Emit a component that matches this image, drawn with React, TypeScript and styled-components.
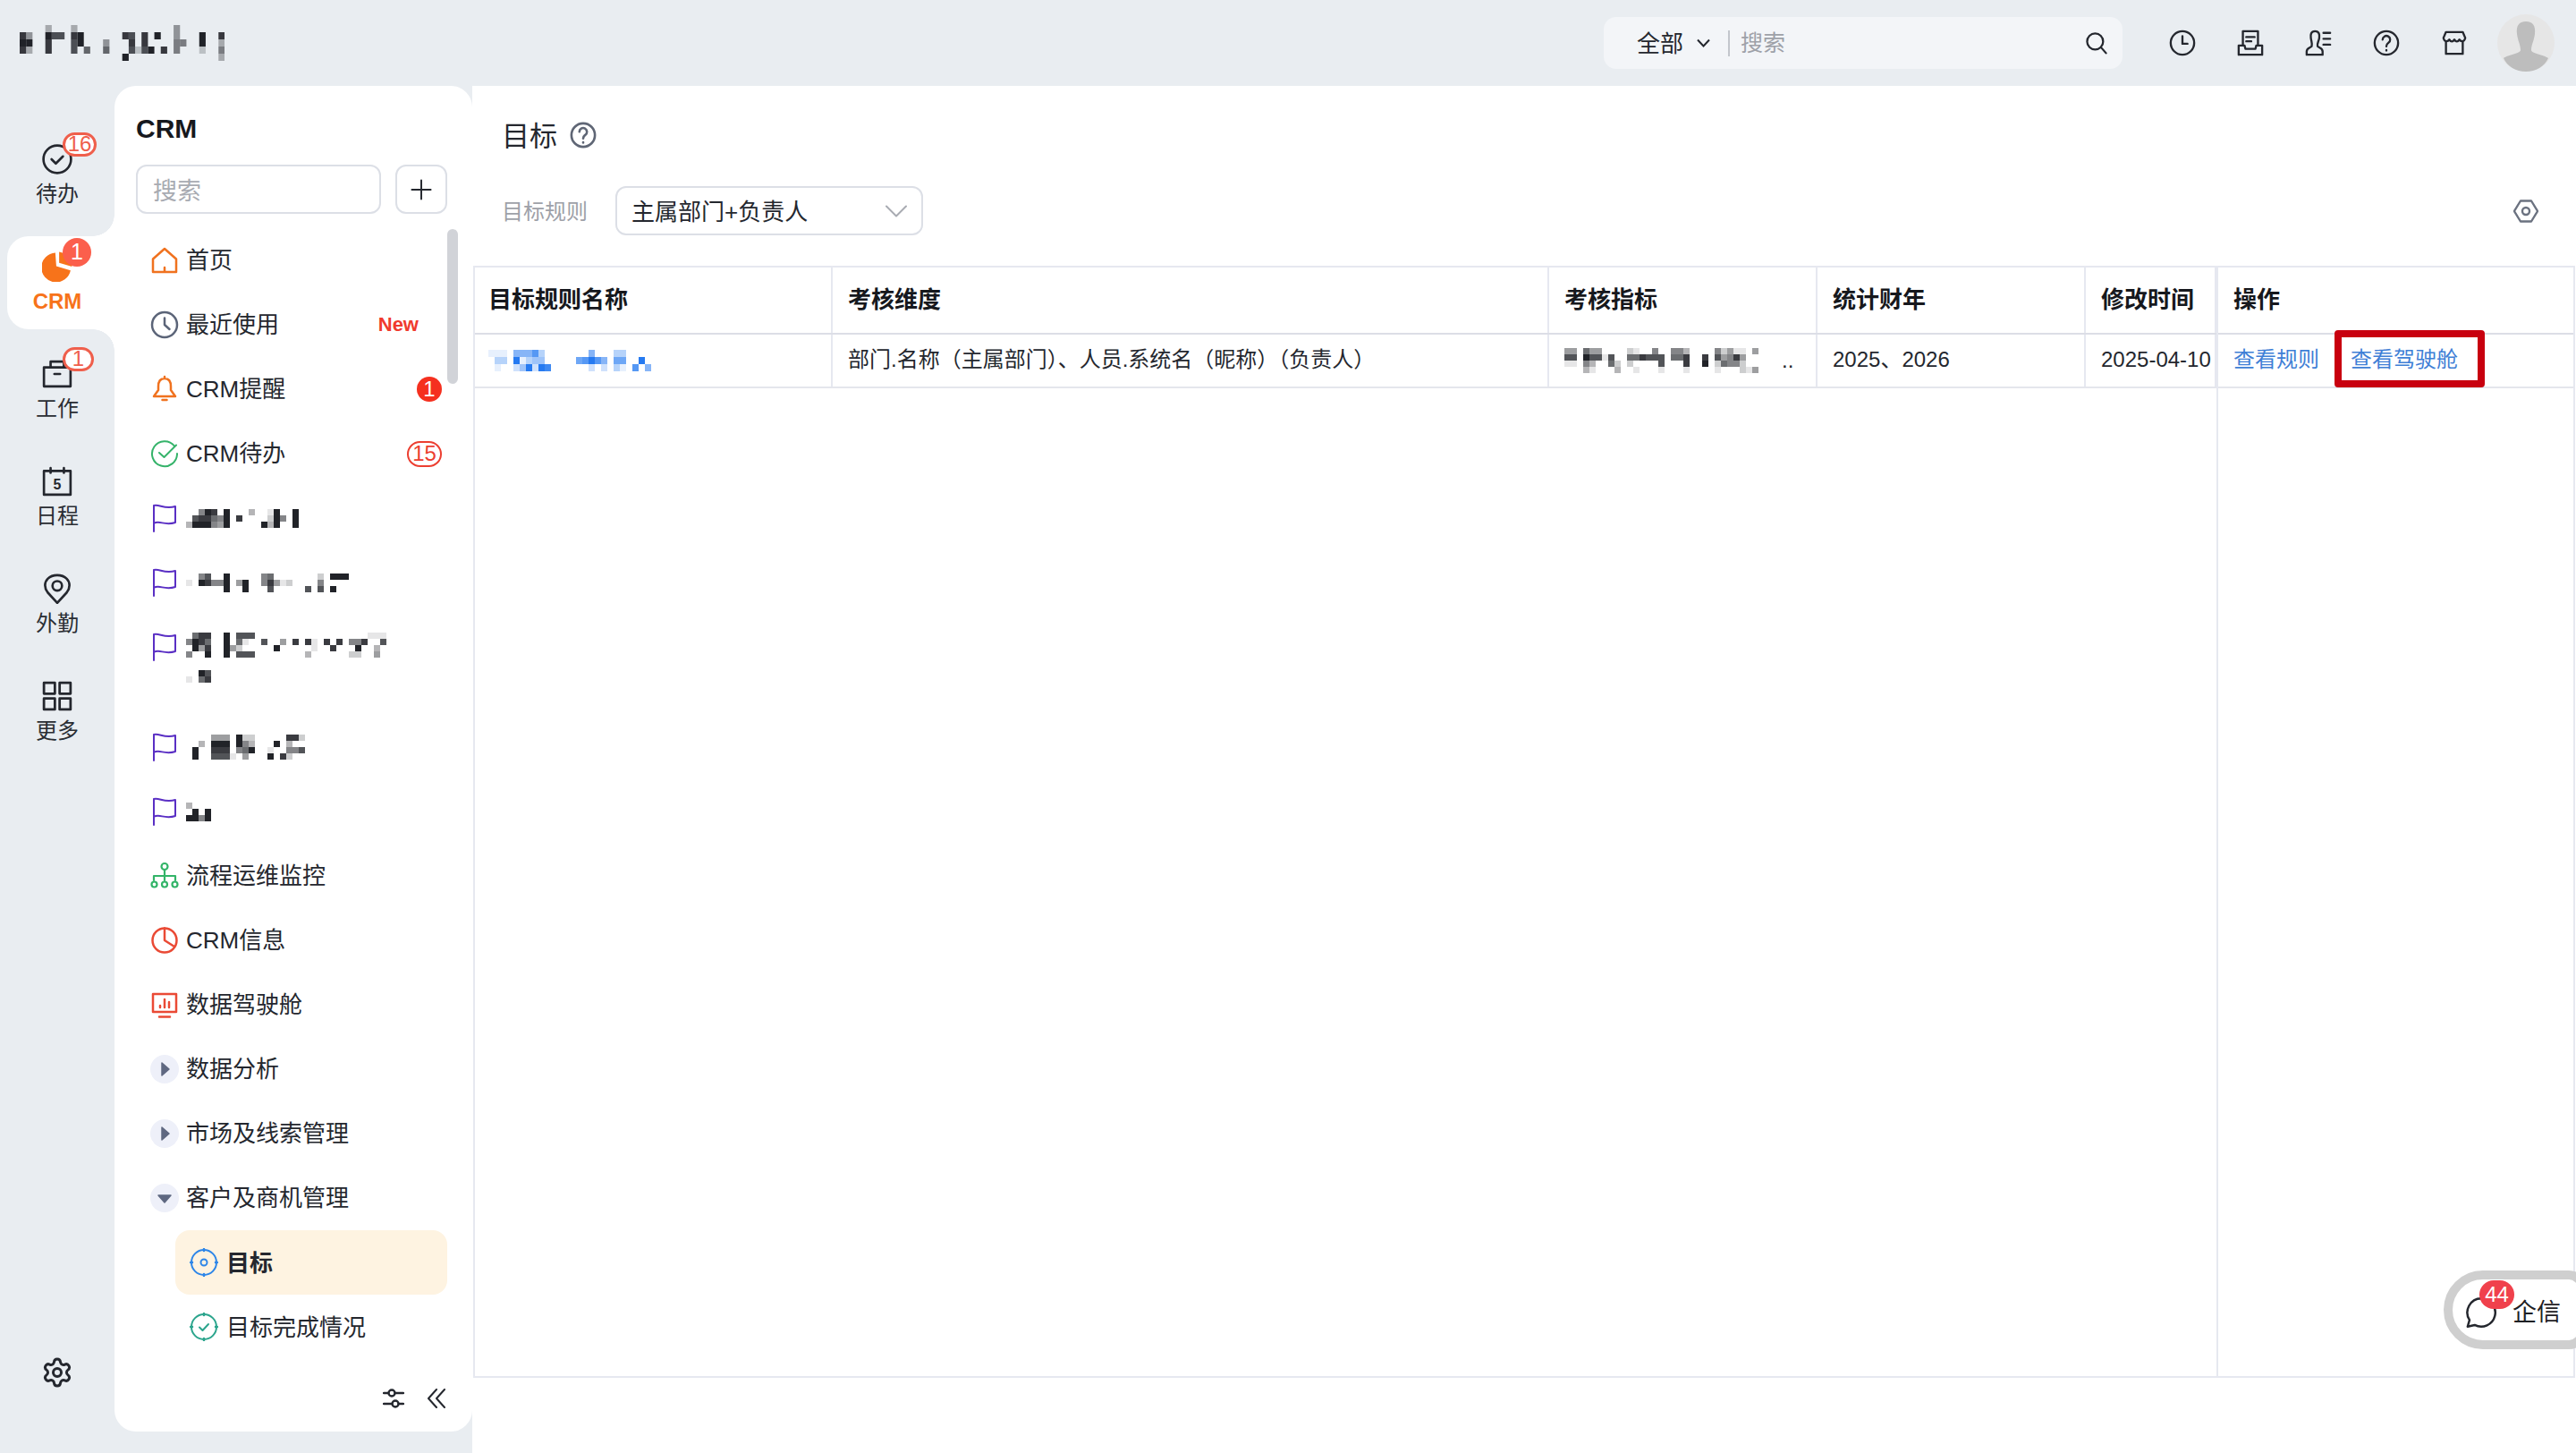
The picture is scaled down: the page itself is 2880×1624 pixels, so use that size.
import React from "react";
import styled, { createGlobalStyle } from "styled-components";
import { Settings } from "lucide-react";

const GlobalStyle = createGlobalStyle`
  html, body {
    margin: 0;
    padding: 0;
    background: #fff;
  }
  body {
    font-family: "Liberation Sans", "Noto Sans CJK SC", sans-serif;
    color: #24272e;
  }
  * {
    box-sizing: border-box;
  }
`;

const Page = styled.div`
  width: 2880px;
  height: 1624px;
  display: flex;
  flex-direction: column;
  overflow: hidden;
  background: #e9edf1;
`;

/* top bar */

const TopBar = styled.header`
  height: 96px;
  flex: none;
  display: flex;
  align-items: center;
  padding: 0 24px 0 22px;
`;

const GlobalSearch = styled.div`
  margin-left: auto;
  width: 580px;
  height: 58px;
  display: flex;
  align-items: center;
  padding: 0 16px 0 37px;
  background: #f3f5f8;
  border-radius: 14px;
  font-size: 26px;
`;

const SearchScope = styled.span`
  margin-bottom: 4px;
`;

const ScopeCaret = styled.svg`
  width: 15px;
  height: 10px;
  margin-left: 15px;
`;

const SearchDivider = styled.span`
  width: 2px;
  height: 29px;
  margin: 0 12px 0 20px;
  background: #c3c6cc;
`;

const SearchHint = styled.span`
  flex: 1;
  margin-bottom: 4px;
  font-size: 25px;
  color: #9ea1a8;
`;

const TopIcons = styled.div`
  display: flex;
  align-items: center;
  gap: 46px;
  margin-left: 52px;
`;

const Avatar = styled.svg`
  width: 64px;
  height: 64px;
  margin-left: 33px;
`;

/* rail */

const Body = styled.div`
  flex: 1;
  display: flex;
  min-height: 0;
`;

const Rail = styled.nav`
  width: 128px;
  flex: none;
  display: flex;
  flex-direction: column;
  gap: 16.2px;
  padding: 47.5px 0 72px;
`;

const RailItem = styled.div<{ $active?: boolean }>`
  position: relative;
  width: 120px;
  height: 104px;
  margin-left: 8px;
  padding: 16px 8px 0 0;
  display: flex;
  flex-direction: column;
  align-items: center;
  gap: 6px;
  border-radius: 24px 0 0 24px;
  background: ${(p) => (p.$active ? "#fff" : "transparent")};

  ${(p) =>
    p.$active &&
    `
    &::before, &::after {
      content: "";
      position: absolute;
      right: 0;
      width: 24px;
      height: 24px;
    }
    &::before {
      top: -24px;
      background: radial-gradient(circle at 0 0, transparent 23.5px, #fff 24px);
    }
    &::after {
      bottom: -24px;
      background: radial-gradient(circle at 0 100%, transparent 23.5px, #fff 24px);
    }
  `}
`;

const RailIcon = styled.div`
  position: relative;
  width: 36px;
  height: 36px;
  display: flex;
  align-items: center;
  justify-content: center;
`;

const RailLabel = styled.span<{ $active?: boolean }>`
  font-size: 24px;
  line-height: 30px;
  font-weight: ${(p) => (p.$active ? 700 : 400)};
  color: ${(p) => (p.$active ? "#f7731a" : "#2a2d33")};
`;

const RailBadge = styled.span<{ $filled?: boolean; $w: number; $h: number }>`
  position: absolute;
  left: 24px;
  top: ${(p) => (p.$filled ? -14 : -12)}px;
  width: ${(p) => p.$w}px;
  height: ${(p) => p.$h}px;
  display: flex;
  align-items: center;
  justify-content: center;
  border-radius: 20px;
  font-size: ${(p) => (p.$filled ? 25 : 24)}px;
  color: ${(p) => (p.$filled ? "#fff" : "#ef5f4c")};
  background: ${(p) => (p.$filled ? "#fb5f4c" : "#fff")};
  border: ${(p) => (p.$filled ? "none" : "3px solid #ef5f4c")};
`;

const RailFoot = styled.div`
  margin-top: auto;
  display: flex;
  justify-content: center;
  color: #24272e;
`;

/* menu panel */

const Panel = styled.aside`
  position: relative;
  width: 400px;
  height: 1504px;
  flex: none;
  display: flex;
  flex-direction: column;
  padding-top: 29px;
  background: #fff;
  border-radius: 24px;
`;

const PanelTitle = styled.h2`
  margin: 0 0 21px 24px;
  font-size: 30px;
  line-height: 38px;
  font-weight: 700;
  color: #16181d;
`;

const PanelSearchRow = styled.div`
  display: flex;
  gap: 16px;
  height: 55px;
  margin: 0 28px 16px 24px;
  flex: none;
`;

const PanelSearch = styled.div`
  flex: 1;
  display: flex;
  align-items: center;
  padding-left: 17px;
  border: 2.5px solid #dcdfe6;
  border-radius: 12px;
  font-size: 27px;
  color: #a8abb2;
`;

const AddButton = styled.button`
  width: 58px;
  padding: 0;
  display: flex;
  align-items: center;
  justify-content: center;
  background: #fff;
  border: 2.5px solid #dcdfe6;
  border-radius: 12px;
`;

const MenuList = styled.div`
  flex: 1;
  min-height: 0;
  overflow: hidden;
  width: 372px;
`;

const ScrollThumb = styled.div`
  position: absolute;
  left: 372px;
  top: 160px;
  width: 12px;
  height: 173px;
  border-radius: 6px;
  background: #d1d3d8;
`;

const MenuRow = styled.div<{ $tall?: boolean }>`
  height: ${(p) => (p.$tall ? 112 : 72)}px;
  display: flex;
  align-items: ${(p) => (p.$tall ? "flex-start" : "center")};
  padding: ${(p) => (p.$tall ? "20px 6px 0 40px" : "0 6px 0 40px")};
  font-size: 26px;
  color: #24272e;
`;

const MenuIcon = styled.div`
  width: 32px;
  height: 32px;
  flex: none;
  margin-right: 8px;
`;

const MenuText = styled.span`
  flex: 1;
  margin-bottom: 5px;
  white-space: nowrap;
`;

const SubRow = styled.div<{ $active?: boolean }>`
  height: 72px;
  margin-left: 68px;
  display: flex;
  align-items: center;
  gap: 9px;
  padding-left: 16px;
  border-radius: 16px;
  font-size: 26px;
  font-weight: ${(p) => (p.$active ? 700 : 400)};
  background: ${(p) => (p.$active ? "#fef3e1" : "transparent")};
`;

const SubText = styled.span`
  margin-bottom: 4px;
`;

const NewTag = styled.span`
  margin-right: 26px;
  font-size: 22px;
  font-weight: 700;
  color: #f03a2e;
`;

const CountDot = styled.span`
  width: 28px;
  height: 28px;
  display: flex;
  align-items: center;
  justify-content: center;
  border-radius: 50%;
  font-size: 24px;
  color: #fff;
  background: #f5301f;
`;

const CountPill = styled.span`
  width: 39px;
  height: 29px;
  display: flex;
  align-items: center;
  justify-content: center;
  border: 2px solid #ec3f31;
  border-radius: 15px;
  font-size: 24px;
  color: #ec3f31;
`;

const PanelFoot = styled.div`
  height: 60px;
  flex: none;
  display: flex;
  align-items: center;
  justify-content: flex-end;
  gap: 26px;
  padding: 0 30px 14px 0;
`;

/* main area */

const Main = styled.main`
  position: relative;
  flex: 1;
  min-width: 0;
  background: #fff;
  padding-top: 36px;
`;

const TitleRow = styled.div`
  height: 38px;
  display: flex;
  align-items: center;
  gap: 14px;
  padding-left: 33px;
  font-size: 31px;
  color: #24272e;
`;

const TitleText = styled.span`
  margin-bottom: 4px;
`;

const FilterRow = styled.div`
  height: 55px;
  margin-top: 38px;
  display: flex;
  align-items: center;
  padding: 0 42px 0 33px;
`;

const FilterLabel = styled.span`
  width: 127px;
  margin-bottom: 3px;
  font-size: 24px;
  color: #9ea1a8;
`;

const RuleSelect = styled.div`
  width: 344px;
  height: 55px;
  display: flex;
  align-items: center;
  justify-content: space-between;
  padding: 0 16px 0 16px;
  border: 2.5px solid #dcdfe6;
  border-radius: 12px;
  font-size: 26px;
`;

const RuleValue = styled.span`
  margin-bottom: 2px;
`;

const FilterSpacer = styled.div`
  flex: 1;
`;

const TableFrame = styled.div`
  width: 2350px;
  height: 1243px;
  margin: 34px 0 0 1px;
  display: flex;
  border: 2px solid #e6e8f0;
`;

const TableBody = styled.div`
  width: 1947px;
  flex: none;
`;

const TableRow = styled.div<{ $head?: boolean }>`
  display: grid;
  grid-template-columns: 400px 801px 300px 300px 146px;
  height: ${(p) => (p.$head ? 75 : 60)}px;
  border-bottom: 2px solid ${(p) => (p.$head ? "#dcdee6" : "#e4e6ec")};
`;

const Cell = styled.div<{ $head?: boolean }>`
  display: flex;
  align-items: center;
  padding-left: 17px;
  overflow: hidden;
  white-space: nowrap;
  border-right: 2px solid #e6e8f0;
  font-size: ${(p) => (p.$head ? 26 : 24)}px;
  font-weight: ${(p) => (p.$head ? 700 : 400)};
  color: ${(p) => (p.$head ? "#16181d" : "#24272e")};

  &:first-child {
    padding-left: 15px;
  }
`;

const CellText = styled.span<{ $up?: number }>`
  margin-bottom: ${(p) => p.$up ?? 8}px;
`;

const CellDots = styled.span`
  margin-left: 26px;
`;

const OpColumn = styled.div`
  flex: 1;
  border-left: 2px solid #e6e8f0;
`;

const OpHead = styled.div`
  height: 75px;
  display: flex;
  align-items: center;
  padding-left: 17px;
  border-bottom: 2px solid #dcdee6;
  font-size: 26px;
  font-weight: 700;
  color: #16181d;
`;

const OpCell = styled.div`
  height: 60px;
  display: flex;
  align-items: center;
  padding-left: 17px;
  gap: 17px;
  border-bottom: 2px solid #e4e6ec;
  font-size: 24px;
  color: #3f7fd6;
`;

const HighlightBox = styled.span`
  width: 168px;
  height: 64px;
  margin-top: -4px;
  display: flex;
  align-items: center;
  padding: 0 0 3px 10px;
  border: 8px solid #c8000f;
  border-radius: 4px;
  white-space: nowrap;
`;

const ChatWidget = styled.div`
  position: absolute;
  top: 1324px;
  right: -12px;
  width: 160px;
  height: 88px;
  display: flex;
  align-items: center;
  gap: 17px;
  padding-left: 14px;
  background: #fff;
  border: 10px solid #cfcfcf;
  border-radius: 44px 20px 20px 44px;
  font-size: 27px;
  color: #1e2024;
`;

const ChatIcon = styled.div`
  position: relative;
  width: 36px;
  height: 36px;
  margin-top: 6px;
  flex: none;
`;

const ChatCount = styled.span`
  position: absolute;
  left: 16px;
  top: -18px;
  width: 39px;
  height: 32px;
  display: flex;
  align-items: center;
  justify-content: center;
  border-radius: 16px;
  font-size: 24px;
  color: #fff;
  background: #f0414c;
`;

const ChatText = styled.span`
  margin-bottom: 0;
  white-space: nowrap;
`;

/* pixelated (redacted) text */

const Mosaic = ({
  rows,
  cw = 7,
  ch = 7,
  color = "#15171c",
}: {
  rows: string[];
  cw?: number;
  ch?: number;
  color?: string;
}) => {
  const cols = Math.max(...rows.map((r) => r.length));
  return (
    <svg width={cols * cw} height={rows.length * ch} style={{ display: "block", flex: "none" }}>
      {rows.map((row, y) =>
        row.split("").map((c, x) =>
          c === "." ? null : (
            <rect
              key={`${x}-${y}`}
              x={x * cw}
              y={y * ch}
              width={cw}
              height={ch}
              fill={color}
              fillOpacity={Number(c) / 9.5}
            />
          )
        )
      )}
    </svg>
  );
};

const logoRows = [
  "....3...3...............4.......",
  "84..977.89......87.8.9..4...9..8",
  "99..8...79...4...8.8....55..9..3",
  "83..8...7.6..6...7279.8.5...2..5",
  "................9..............3",
];

const flagRows1 = [
  "..598.9...3..19..9",
  ".788659.8....295.9",
  "3999549.....939..9",
];

const flagRows2 = [
  "..57..9.....56.......2.999",
  "1.98559.49..58412....5....",
  "......9..9...7.....7.7.9..",
];

const flagRows3 = [
  ".688..9.777..................111",
  "5986..9.61..7..4.8.81.8.8.558..7",
  ".948..942.....9.....1..8...9..3.",
  "5..9..9.777........3......22..4.",
  "................................",
  "................................",
  "..97",
  "1.68",
];

const flagRows4 = [
  "....444.922.....882",
  "..3.999.953...9.3..",
  ".9..888.569..1..557",
  ".9..7771.4...9.82..",
];

const flagRows5 = ["3...", ".9.9", "9959"];

const nameRows = [
  "111.55573.......5...33",
  ".33.91344.....67975.66..9",
  ".1..249298......2.2.31.7.5",
];

const metricRows = [
  "44.644....21..5..553....52411.4",
  "77.97717..668777.668..8.74584",
  "11.53..62.2....7...8..9.26552",
  "...31...3..1...1...1....1...214",
];

/* icons */

const Ico = styled.svg`
  display: block;
  fill: none;
  stroke-linecap: round;
  stroke-linejoin: round;
`;

const Glyph = ({
  d,
  size = 32,
  color = "#24272e",
  sw = 2.5,
  children,
}: {
  d?: string;
  size?: number;
  color?: string;
  sw?: number;
  children?: React.ReactNode;
}) => (
  <Ico width={size} height={size} viewBox="0 0 32 32" stroke={color} strokeWidth={sw}>
    {d && <path d={d} />}
    {children}
  </Ico>
);

const Flag = () => (
  <Glyph color="#5a2fc4" sw={2} d="M4 31V2C10 0 16 7 28 3V21C16 25 10 18 4 22" />
);

const Expander = ({ open }: { open?: boolean }) => (
  <Ico width={32} height={32} viewBox="0 0 32 32">
    <circle cx="16" cy="16" r="16" fill="#eef0f9" />
    <path
      d={open ? "M9 13H23L16 21Z" : "M13 9L21 16L13 23Z"}
      fill="#5f6881"
      stroke="#5f6881"
      strokeWidth="1.5"
    />
  </Ico>
);

const TargetRing = ({ color, children }: { color: string; children: React.ReactNode }) => (
  <Glyph color={color} sw={2}>
    <circle cx="16" cy="16" r="14" />
    <path d="M16 1v2M16 29v2M1 16h2M29 16h2" strokeWidth="2.5" />
    {children}
  </Glyph>
);

const menuTop = [
  {
    text: "首页",
    icon: <Glyph color="#f0721f" d="M3 14.5L16 3L29 14.5V29H3ZM16 29V24" />,
  },
  {
    text: "最近使用",
    icon: (
      <Glyph color="#5b6478" d="M16 8.5V16L21.5 21">
        <circle cx="16" cy="16" r="14" />
      </Glyph>
    ),
    extra: <NewTag>New</NewTag>,
  },
  {
    text: "CRM提醒",
    icon: <Glyph color="#f0721f" d="M16 4C10.5 4 9 8.5 9 13V17L4 24H28L23 17V13C23 8.5 21.5 4 16 4ZM16 2V4M13.5 28H18.5" />,
    extra: <CountDot>1</CountDot>,
  },
  {
    text: "CRM待办",
    icon: (
      <Glyph color="#35b36a" sw={2} d="M27 7.5A14 14 0 1 0 30 16M10 15L15.5 20L29 6.5" />
    ),
    extra: <CountPill>15</CountPill>,
  },
];

const menuTools = [
  {
    text: "流程运维监控",
    icon: (
      <Glyph color="#33b468" sw={2.2} d="M16 9V21M4 21V16H28V21">
        <circle cx="16" cy="5.5" r="3.5" />
        <circle cx="4.5" cy="25.5" r="3" />
        <circle cx="16" cy="25.5" r="3" />
        <circle cx="27.5" cy="25.5" r="3" />
      </Glyph>
    ),
  },
  {
    text: "CRM信息",
    icon: (
      <Glyph color="#ea4a35" d="M16 2.5V16L27 23">
        <circle cx="16" cy="16" r="13.5" />
      </Glyph>
    ),
  },
  {
    text: "数据驾驶舱",
    icon: <Glyph color="#ea4a35" d="M3 4H29V24H3ZM10 29.5H22M11 17V19M16 10V19M21 13V19" />,
  },
];

const railEntries = [
  {
    label: "待办",
    icon: (
      <Glyph size={34} color="#24272e" d="M10 16L14.5 20.5L22 13">
        <circle cx="16" cy="16" r="14.5" />
      </Glyph>
    ),
    badge: (
      <RailBadge $w={38} $h={27}>
        16
      </RailBadge>
    ),
  },
  {
    label: "CRM",
    active: true,
    icon: (
      <Ico width={34} height={34} viewBox="0 0 32 32">
        <path fill="#f7731a" d="M14 1.5A15.5 15.5 0 1 0 30 20L15 15.5Z" />
        <path fill="#f7731a" d="M18 0.5V12L31.5 16A16 16 0 0 0 18 .5Z" />
      </Ico>
    ),
    badge: (
      <RailBadge $filled $w={32} $h={32}>
        1
      </RailBadge>
    ),
  },
  {
    label: "工作",
    icon: <Glyph size={34} d="M2 9H30V29H2ZM9 9V3H23V9M13 16H19" />,
    badge: (
      <RailBadge $w={35} $h={27}>
        1
      </RailBadge>
    ),
  },
  {
    label: "日程",
    icon: (
      <Glyph size={34} d="M2 5H30V30H2ZM9 2V7M23 2V7">
        <text x="16" y="24" fontSize="15" fontWeight="700" textAnchor="middle" fill="#24272e" stroke="none">
          5
        </text>
      </Glyph>
    ),
  },
  {
    label: "外勤",
    icon: (
      <Glyph size={34} d="M16 31L6 20C2 15 2.5 9 6 5.5C11 .5 21 .5 26 5.5C29.5 9 30 15 26 20Z">
        <circle cx="16" cy="13" r="5" />
      </Glyph>
    ),
  },
  {
    label: "更多",
    icon: <Glyph size={34} sw={2.6} d="M2 2H13.5V13.5H2ZM18.5 2H30V13.5H18.5ZM2 18.5H13.5V30H2ZM18.5 18.5H30V30H18.5Z" />,
  },
];

const helpPath = "M11.5 12A4.5 4.5 0 1 1 18.5 15.8C17 17 16 17.5 16 20M16 24.5V25";

export default function App() {
  return (
    <Page>
      <GlobalStyle />
      <TopBar>
        <Mosaic rows={logoRows} cw={7.17} ch={8} />
        <GlobalSearch>
          <SearchScope>全部</SearchScope>
          <ScopeCaret viewBox="0 0 15 10" fill="none" stroke="#24272e" strokeWidth="2">
            <path d="M1 1.5L7.5 8.5L14 1.5" />
          </ScopeCaret>
          <SearchDivider />
          <SearchHint>搜索</SearchHint>
          <Glyph size={26} d="M14 3A11 11 0 1 0 14 25A11 11 0 1 0 14 3ZM22 22L29 30" sw={2.8} />
        </GlobalSearch>
        <TopIcons>
          <Glyph size={30} d="M16 8V17H22">
            <circle cx="16" cy="16" r="14" />
          </Glyph>
          <Glyph size={30} d="M7 19V2H25V19M11 9H21M11 14H17M2 19H9L10 23H22L23 19H30V30H2Z" />
          <Glyph
            size={30}
            d="M12 2C7 2 6.5 6 7 10C7.5 14 9 17 8 20C6 22 2 22 2 26V30H21V26C21 22 17 22 15 20C14 17 16.5 14 17 10C17.5 6 17 2 12 2ZM22 4H30M22 11H30M22 18H30"
          />
          <Glyph size={30} d={helpPath}>
            <circle cx="16" cy="16" r="14" />
          </Glyph>
          <Glyph
            size={30}
            d="M6 3H26L29 10C28 15 24 15 22 12C20 15 18 15 16 12C14 15 12 15 10 12C8 15 4 15 3 10ZM6 15V29H26V15"
          />
        </TopIcons>
        <Avatar viewBox="0 0 64 64">
          <circle cx="32" cy="32" r="32" fill="#e6e6e6" />
          <path
            fill="#bdbdbd"
            d="M32 8C24 8 21 13 22 22C23 30 26 34 26 40C26 44 12 45 7 49C11 58 21 64 32 64C43 64 53 58 57 49C52 45 38 44 38 40C38 34 41 30 42 22C43 13 40 8 32 8Z"
          />
        </Avatar>
      </TopBar>
      <Body>
        <Rail>
          {railEntries.map((entry) => (
            <RailItem key={entry.label} $active={entry.active}>
              <RailIcon>
                {entry.icon}
                {entry.badge}
              </RailIcon>
              <RailLabel $active={entry.active}>{entry.label}</RailLabel>
            </RailItem>
          ))}
          <RailFoot>
            <Settings size={36} strokeWidth={2} />
          </RailFoot>
        </Rail>
        <Panel>
          <PanelTitle>CRM</PanelTitle>
          <PanelSearchRow>
            <PanelSearch>搜索</PanelSearch>
            <AddButton>
              <Glyph size={26} sw={2.4} d="M16 3V29M3 16H29" />
            </AddButton>
          </PanelSearchRow>
          <MenuList>
            {menuTop.map((item) => (
              <MenuRow key={item.text}>
                <MenuIcon>{item.icon}</MenuIcon>
                <MenuText>{item.text}</MenuText>
                {item.extra}
              </MenuRow>
            ))}
            <MenuRow>
              <MenuIcon>
                <Flag />
              </MenuIcon>
              <Mosaic rows={flagRows1} />
            </MenuRow>
            <MenuRow>
              <MenuIcon>
                <Flag />
              </MenuIcon>
              <Mosaic rows={flagRows2} />
            </MenuRow>
            <MenuRow $tall>
              <MenuIcon>
                <Flag />
              </MenuIcon>
              <Mosaic rows={flagRows3} />
            </MenuRow>
            <MenuRow>
              <MenuIcon>
                <Flag />
              </MenuIcon>
              <Mosaic rows={flagRows4} />
            </MenuRow>
            <MenuRow>
              <MenuIcon>
                <Flag />
              </MenuIcon>
              <Mosaic rows={flagRows5} />
            </MenuRow>
            {menuTools.map((item) => (
              <MenuRow key={item.text}>
                <MenuIcon>{item.icon}</MenuIcon>
                <MenuText>{item.text}</MenuText>
              </MenuRow>
            ))}
            <MenuRow>
              <MenuIcon>
                <Expander />
              </MenuIcon>
              <MenuText>数据分析</MenuText>
            </MenuRow>
            <MenuRow>
              <MenuIcon>
                <Expander />
              </MenuIcon>
              <MenuText>市场及线索管理</MenuText>
            </MenuRow>
            <MenuRow>
              <MenuIcon>
                <Expander open />
              </MenuIcon>
              <MenuText>客户及商机管理</MenuText>
            </MenuRow>
            <SubRow $active>
              <TargetRing color="#2e86e8">
                <circle cx="16" cy="16" r="3.5" />
              </TargetRing>
              <SubText>目标</SubText>
            </SubRow>
            <SubRow>
              <TargetRing color="#2ca58d">
                <path d="M11 16.5L14.5 20L21 13" />
              </TargetRing>
              <SubText>目标完成情况</SubText>
            </SubRow>
          </MenuList>
          <ScrollThumb />
          <PanelFoot>
            <Ico width={24} height={22} viewBox="0 0 24 22" stroke="#24272e" strokeWidth="2.4">
              <path d="M1 5H6M14 5H23M1 17H10M18 17H23" />
              <circle cx="10" cy="5" r="3.5" />
              <circle cx="14" cy="17" r="3.5" />
            </Ico>
            <Ico width={20} height={22} viewBox="0 0 20 22" stroke="#24272e" strokeWidth="2">
              <path d="M10 1L1 11L10 21M19 1L10 11L19 21" />
            </Ico>
          </PanelFoot>
        </Panel>
        <Main>
          <TitleRow>
            <TitleText>目标</TitleText>
            <Glyph size={30} color="#5f6675" sw={2.8} d={helpPath}>
              <circle cx="16" cy="16" r="14" />
            </Glyph>
          </TitleRow>
          <FilterRow>
            <FilterLabel>目标规则</FilterLabel>
            <RuleSelect>
              <RuleValue>主属部门+负责人</RuleValue>
              <Ico width={24} height={14} viewBox="0 0 24 14" stroke="#a8abb2" strokeWidth="2">
                <path d="M1 1.5L12 12.5L23 1.5" />
              </Ico>
            </RuleSelect>
            <FilterSpacer />
            <Ico width={28} height={28} viewBox="0 0 28 28" stroke="#6b7280" strokeWidth="2.4">
              <path d="M8 2.5H20L27 14L20 25.5H8L1 14Z" />
              <circle cx="14" cy="14" r="4" />
            </Ico>
          </FilterRow>
          <TableFrame>
            <TableBody>
              <TableRow $head>
                <Cell $head>
                  <CellText $up={6}>目标规则名称</CellText>
                </Cell>
                <Cell $head>
                  <CellText $up={6}>考核维度</CellText>
                </Cell>
                <Cell $head>
                  <CellText $up={6}>考核指标</CellText>
                </Cell>
                <Cell $head>
                  <CellText $up={6}>统计财年</CellText>
                </Cell>
                <Cell $head>
                  <CellText $up={6}>修改时间</CellText>
                </Cell>
              </TableRow>
              <TableRow>
                <Cell>
                  <Mosaic rows={nameRows} ch={8} color="#1a73f0" />
                </Cell>
                <Cell>
                  <CellText>部门.名称（主属部门）、人员.系统名（昵称）（负责人）</CellText>
                </Cell>
                <Cell>
                  <Mosaic rows={metricRows} />
                  <CellDots>..</CellDots>
                </Cell>
                <Cell>
                  <CellText>2025、2026</CellText>
                </Cell>
                <Cell>
                  <CellText $up={3}>2025-04-10</CellText>
                </Cell>
              </TableRow>
            </TableBody>
            <OpColumn>
              <OpHead>
                <CellText $up={6}>操作</CellText>
              </OpHead>
              <OpCell>
                <CellText>查看规则</CellText>
                <HighlightBox>查看驾驶舱</HighlightBox>
              </OpCell>
            </OpColumn>
          </TableFrame>
          <ChatWidget>
            <ChatIcon>
              <Glyph size={36} sw={2.2} d="M16 2A14 14 0 1 1 9.5 28.4L2.5 30L4.4 23.5A14 14 0 0 1 16 2Z" />
              <ChatCount>44</ChatCount>
            </ChatIcon>
            <ChatText>企信</ChatText>
          </ChatWidget>
        </Main>
      </Body>
    </Page>
  );
}
